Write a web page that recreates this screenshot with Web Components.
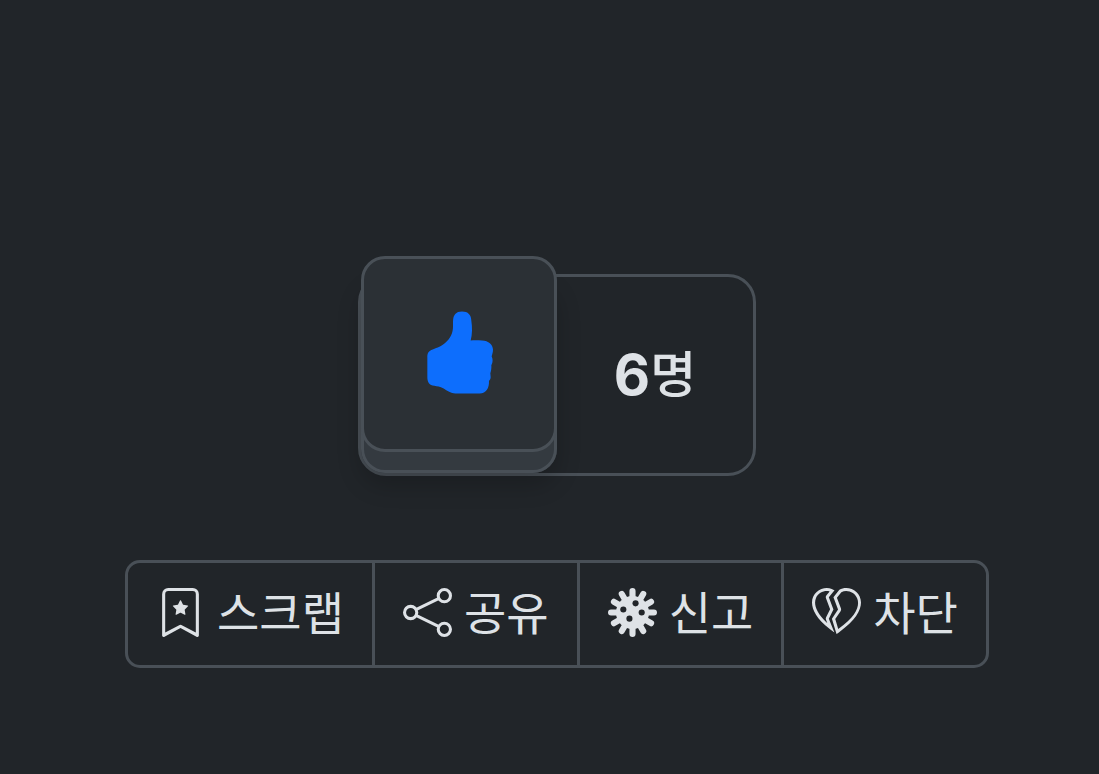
<!DOCTYPE html>
<html lang="ko">
<head>
<meta charset="utf-8">
<meta name="viewport" content="width=device-width, initial-scale=1">
<title>추천</title>
<style>
  :root {
    --bg: #212529;
    --face: #2b3035;
    --side: #343a40;
    --line: #495057;
    --text: #dee2e6;
    --accent: #0d6efd;
  }
  body {
    margin: 0;
    background: var(--bg);
    color: var(--text);
    font-family: "Liberation Sans", "Noto Sans CJK KR", sans-serif;
  }
</style>
</head>
<body>
<post-reactions>
  <like-counter slot="vote" count="6" unit="명"></like-counter>
  <action-bar>
    <action-button icon="bookmark" position="first">스크랩</action-button>
    <action-button icon="share">공유</action-button>
    <action-button icon="virus">신고</action-button>
    <action-button icon="heartbreak" position="last">차단</action-button>
  </action-bar>
</post-reactions>

<script>
const ICONS = {
  bookmark: `
    <path d="M7.84 4.1a.178.178 0 0 1 .32 0l.634 1.285a.18.18 0 0 0 .134.098l1.42.206c.145.021.204.2.098.303L9.42 6.993a.18.18 0 0 0-.051.158l.242 1.414a.178.178 0 0 1-.258.187l-1.27-.668a.18.18 0 0 0-.165 0l-1.27.668a.178.178 0 0 1-.257-.187l.242-1.414a.18.18 0 0 0-.05-.158l-1.03-1.001a.178.178 0 0 1 .098-.303l1.42-.206a.18.18 0 0 0 .134-.098z"/>
    <path d="M2 2a2 2 0 0 1 2-2h8a2 2 0 0 1 2 2v13.5a.5.5 0 0 1-.777.416L8 13.101l-5.223 2.815A.5.5 0 0 1 2 15.5zm2-1a1 1 0 0 0-1 1v12.566l4.723-2.482a.5.5 0 0 1 .554 0L13 14.566V2a1 1 0 0 0-1-1z"/>`,
  share: `
    <g fill="none" stroke="currentColor">
      <circle cx="13.5" cy="2.5" r="2"/>
      <circle cx="2.5" cy="8" r="2"/>
      <circle cx="13.5" cy="13.5" r="2"/>
      <path d="M11.6 3.5 4.4 7M4.4 9l7.2 3.5"/>
    </g>`,
  virus: `
    <g stroke="currentColor" stroke-width="2" stroke-linecap="round">
      <path d="M8 1v14M1 8h14M4.5 1.94l7 12.12M11.5 1.94l-7 12.12M1.94 4.5l12.12 7M1.94 11.5l12.12-7"/>
    </g>
    <circle cx="8" cy="8" r="5.4"/>
    <g fill="var(--bg)">
      <circle cx="9" cy="5" r="1"/>
      <circle cx="5" cy="7" r="1"/>
      <circle cx="11" cy="8" r="1"/>
      <circle cx="7" cy="10" r="1"/>
    </g>`,
  heartbreak: `
    <path d="M8.867 14.41c13.308-9.322 4.79-16.563.064-13.824L7 3l1.5 4-2 3L8 15a38 38 0 0 0 .867-.59m-.303-1.01-.971-3.237 1.74-2.608a1 1 0 0 0 .103-.906l-1.3-3.468 1.45-1.813c1.861-.948 4.446.002 5.211 2.11.757 2.087.083 5.566-6.233 9.922m-1.25 1.137a36 36 0 0 1-1.522-1.116C-5.077 4.97 1.842-1.472 6.454.293c.314.12.618.279.904.477L5.5 3 7 7l-1.5 3zm-2.3-3.06-.442-1.106a1 1 0 0 1 .034-.818l1.305-2.61L4.564 3.35a1 1 0 0 1 .168-.991l1.032-1.24c-1.688-.449-3.7.398-4.456 2.128-.711 1.627-.413 4.55 3.706 8.229Z"/>`
};

class PostReactions extends HTMLElement {
  constructor () {
    super();
    this.attachShadow({ mode: 'open' });
    this.shadowRoot.innerHTML = `
      <style>
        :host {
          display: flex;
          flex-direction: column;
          align-items: center;
          gap: 84px;
          padding: 274px 0 84px 15px;
        }
      </style>
      <slot name="vote"></slot>
      <slot></slot>
    `;
  }
}

class LikeCounter extends HTMLElement {
  constructor () {
    super();
    this.attachShadow({ mode: 'open' });
    this.shadowRoot.innerHTML = `
      <style>
        :host {
          display: grid;
          grid-template-columns: 196px 196px;
          border: 3px solid var(--line);
          border-radius: 28px;
        }
        .base {
          box-sizing: border-box;
          height: 196px;
          border-radius: 24px;
          background: var(--side);
          box-shadow: inset 0 0 0 3px var(--line), 0 12px 24px rgba(0, 0, 0, .2);
        }
        button {
          display: flex;
          align-items: center;
          justify-content: center;
          box-sizing: border-box;
          width: 100%;
          height: 100%;
          padding: 0 0 4px 2px;
          border: 3px solid var(--line);
          border-radius: 24px;
          background: var(--face);
          color: var(--accent);
          cursor: pointer;
          transform: translateY(-21px);
        }
        button:active {
          transform: translateY(-6px);
        }
        svg {
          width: 66px;
          height: 83px;
          fill: currentColor;
        }
        output {
          display: flex;
          align-items: center;
          justify-content: center;
          font: 700 56px/1 Inter, sans-serif;
        }
        .unit {
          padding-bottom: 8px;
          font: 500 50px/1 "Noto Sans CJK KR", sans-serif;
        }
      </style>
      <div class="base">
        <button type="button" aria-label="추천">
          <svg viewBox="51 34 198 248" aria-hidden="true">
            <path d="M52 174C52 158 56 154 68 149C83 143 94 140 106 129C122 114 129 99 129 79V65C129 45 138 35 156 35C174 35 184 45 184 63C187 82 187 105 182 122C190 121 203 121 216 122C236 123 248 134 249 149C249 157 247 163 245 169C249 177 249 188 244 196C245 204 243 213 241 220L242 232C242 238 239 240 237 243C238 265 229 281 209 281H136C123 281 111 273 101 266C89 260 82 260 73 258C58 256 52 247 52 232Z"/>
          </svg>
        </button>
      </div>
      <output><span class="count"></span><span class="unit"></span></output>
    `;
  }

  connectedCallback () {
    this.shadowRoot.querySelector('.count').textContent = this.getAttribute('count');
    this.shadowRoot.querySelector('.unit').textContent = this.getAttribute('unit');
  }
}

class ActionBar extends HTMLElement {
  constructor () {
    super();
    this.attachShadow({ mode: 'open' });
    this.shadowRoot.innerHTML = `
      <style>
        :host {
          display: flex;
          padding-left: 3px;
        }
      </style>
      <slot></slot>
    `;
  }

  connectedCallback () {
    this.setAttribute('role', 'group');
  }
}

class ActionButton extends HTMLElement {
  constructor () {
    super();
    this.attachShadow({ mode: 'open' });
    this.shadowRoot.innerHTML = `
      <style>
        :host {
          display: block;
          margin-left: -3px;
        }
        button {
          display: flex;
          align-items: center;
          gap: 12px;
          padding: 22px 28px 26px;
          border: 3px solid var(--line);
          background: transparent;
          color: inherit;
          font: 400 46px/50px "Noto Sans CJK KR", sans-serif;
          white-space: nowrap;
          cursor: pointer;
        }
        button:hover {
          background: var(--side);
        }
        :host([position="first"]) button {
          border-radius: 15px 0 0 15px;
        }
        :host([position="last"]) button {
          border-radius: 0 15px 15px 0;
        }
        svg {
          flex: none;
          width: 49px;
          height: 49px;
          fill: currentColor;
        }
        .label {
          padding-bottom: 4px;
        }
      </style>
      <button type="button">
        <svg viewBox="0 0 16 16" aria-hidden="true"></svg>
        <span class="label"><slot></slot></span>
      </button>
    `;
  }

  connectedCallback () {
    this.shadowRoot.querySelector('svg').innerHTML = ICONS[this.getAttribute('icon')];
  }
}

customElements.define('post-reactions', PostReactions);
customElements.define('like-counter', LikeCounter);
customElements.define('action-bar', ActionBar);
customElements.define('action-button', ActionButton);
</script>
</body>
</html>
